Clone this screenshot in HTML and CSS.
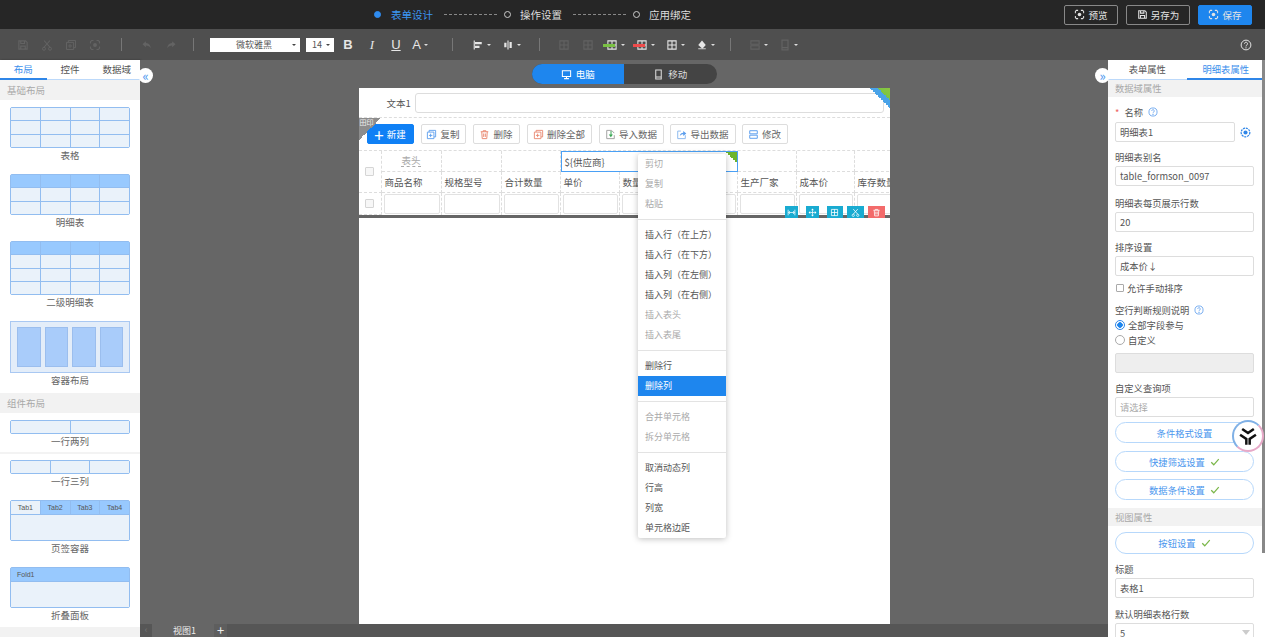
FILE: index.html
```html
<!DOCTYPE html>
<html lang="zh-CN">
<head>
    <meta charset="UTF-8">
    <meta name="viewport" content="width=device-width, initial-scale=1.0">
    <title>表单设计</title>
    <link rel="stylesheet" href="styles.css">
</head>
<body>
    <svg class="defs" aria-hidden="true">
        <symbol id="i-grid" viewBox="0 0 16 16"><path d="M2.5 2.5h11v11h-11zM2.5 8h11M8 2.5v11" fill="none" stroke="currentColor" stroke-width="1.4"/></symbol>
        <symbol id="i-focus" viewBox="0 0 16 16"><circle cx="8" cy="8" r="2.6" fill="currentColor"/><path d="M2 6V3.5L3.5 2H6M10 2h2.5L14 3.5V6M14 10v2.5L12.500 14H10M6 14H3.500L2 12.500V10" fill="none" stroke="currentColor" stroke-width="1.500"/></symbol>
        <symbol id="i-save" viewBox="0 0 16 16"><path d="M2.500 2.500h9l2 2v9h-11zM5 2.500v3.500h5V2.500M5 13.500V9.500h6v4" fill="none" stroke="currentColor" stroke-width="1.500"/></symbol>
        <symbol id="i-pc" viewBox="0 0 16 16"><path d="M2 2.500h12v8.500H2zM8 11v2.500M4.500 14h7" fill="none" stroke="currentColor" stroke-width="1.500"/></symbol>
        <symbol id="i-phone" viewBox="0 0 16 16"><path d="M4 1.500h8v13H4zM4 11.500h8" fill="none" stroke="currentColor" stroke-width="1.500"/></symbol>
        <symbol id="i-check" viewBox="0 0 16 16"><path d="M2 8.500l4 4 8-9" fill="none" stroke="currentColor" stroke-width="2"/></symbol>
        <symbol id="i-help" viewBox="0 0 16 16"><circle cx="8" cy="8" r="6.500" fill="none" stroke="currentColor" stroke-width="1.300"/><path d="M6 6.300a2 2 0 1 1 3.200 1.600c-.8.600-1.200 1-1.200 2" fill="none" stroke="currentColor" stroke-width="1.300"/><circle cx="8" cy="11.800" r=".9" fill="currentColor"/></symbol>
        <symbol id="i-trash" viewBox="0 0 16 16"><path d="M2.500 4h11M6 4V2.500h4V4M4 4l.7 10h6.600L12 4M6.800 6.500v5M9.200 6.500v5" fill="none" stroke="currentColor" stroke-width="1.400"/></symbol>
        <symbol id="i-copy" viewBox="0 0 16 16"><path d="M4.500 4.500V2h9.500v9.500h-2.500M2 4.500h9.500V14H2zM6.700 6.800v5M4.300 9.300h5" fill="none" stroke="currentColor" stroke-width="1.300"/></symbol>
        <symbol id="i-box" viewBox="0 0 16 16"><path d="M2.500 2.500h11v4.500h-11zM2.500 9h11v4.500h-11z" fill="none" stroke="currentColor" stroke-width="1.400"/></symbol>
        <symbol id="i-up" viewBox="0 0 16 16"><path d="M13.500 9v5h-11V3H7" fill="none" stroke="#8ab8ee" stroke-width="1.400"/><path d="M5.500 10c.5-3 2.500-4.500 5-4.500V3L15 6.500 10.500 10V7.500c-2 0-3.500.8-5 2.500z" fill="currentColor"/></symbol>
        <symbol id="i-down" viewBox="0 0 16 16"><path d="M13.500 9v5h-11V2h7l4 4" fill="none" stroke="#999" stroke-width="1.300"/><path d="M8 3v5H5.500L8.500 12l3-4H9.500V3z" fill="currentColor"/></symbol>
        <symbol id="i-target" viewBox="0 0 16 16"><circle cx="8" cy="8" r="6.300" fill="none" stroke="currentColor" stroke-width="1.800" stroke-dasharray="3 1.200"/><circle cx="8" cy="8" r="3" fill="currentColor"/></symbol>
    </svg>

    <header class="topbar">
        <div class="steps">
            <span class="step-dot active"></span><span class="step-name active">表单设计</span>
            <span class="step-line"></span>
            <span class="step-dot"></span><span class="step-name">操作设置</span>
            <span class="step-line"></span>
            <span class="step-dot"></span><span class="step-name">应用绑定</span>
        </div>
        <div class="top-actions">
            <button class="top-btn btn-preview"><svg class="ico"><use href="#i-focus"/></svg>预览</button>
            <button class="top-btn btn-saveas"><svg class="ico"><use href="#i-save"/></svg>另存为</button>
            <button class="top-btn btn-save"><svg class="ico"><use href="#i-focus"/></svg>保存</button>
        </div>
    </header>

    <div class="toolbar">
        <span class="tool off"><svg class="ico"><use href="#i-save"/></svg></span>
        <span class="tool off"><svg class="ico" viewBox="0 0 16 16"><path d="M4 2l8 9M12 2l-8 9" stroke="currentColor" stroke-width="1.500"/><circle cx="4" cy="13" r="2" fill="none" stroke="currentColor" stroke-width="1.300"/><circle cx="12" cy="13" r="2" fill="none" stroke="currentColor" stroke-width="1.300"/></svg></span>
        <span class="tool off"><svg class="ico"><use href="#i-copy"/></svg></span>
        <span class="tool off"><svg class="ico"><use href="#i-focus"/></svg></span>
        <span class="sep sep-a"></span>
        <span class="tool off"><svg class="ico" viewBox="0 0 16 16"><path d="M6.500 3L2 7l4.500 4V8.500c3 0 5 1 6.500 4 0-4-2-7-6.500-7.300z" fill="currentColor"/></svg></span>
        <span class="tool off"><svg class="ico" viewBox="0 0 16 16"><path d="M9.500 3L14 7l-4.500 4V8.500c-3 0-5 1-6.500 4 0-4 2-7 6.500-7.300z" fill="currentColor"/></svg></span>
        <span class="sep sep-b"></span>
        <span class="font-select">微软雅黑<i class="caret dark"></i></span>
        <span class="size-select">14<i class="caret dark"></i></span>
        <span class="tool txt bold">B</span>
        <span class="tool txt ital">I</span>
        <span class="tool txt under">U</span>
        <span class="tool txt color">A<i class="caret"></i></span>
        <span class="sep sep-c"></span>
        <span class="tool wide"><svg class="ico" viewBox="0 0 16 16"><path d="M3 2v12" stroke="currentColor" stroke-width="1.500"/><path d="M4 4h9v3H4zM4 9h6v3H4z" fill="currentColor"/></svg><i class="caret"></i></span>
        <span class="tool wide"><svg class="ico" viewBox="0 0 16 16"><path d="M8 2v12" stroke="currentColor" stroke-width="1.500"/><path d="M3 5h3v6H3zM10 4h3v8h-3z" fill="currentColor"/></svg><i class="caret"></i></span>
        <span class="sep sep-d"></span>
        <span class="tool off"><svg class="ico"><use href="#i-grid"/></svg></span>
        <span class="tool off"><svg class="ico"><use href="#i-grid"/></svg></span>
        <span class="tool wide mark-green"><svg class="ico"><use href="#i-grid"/></svg><i class="caret"></i></span>
        <span class="tool wide mark-red"><svg class="ico"><use href="#i-grid"/></svg><i class="caret"></i></span>
        <span class="tool wide"><svg class="ico"><use href="#i-grid"/></svg><i class="caret"></i></span>
        <span class="tool wide"><svg class="ico" viewBox="0 0 16 16"><path d="M8 2l5 6-4.500 5L3 8z" fill="currentColor"/><path d="M3 13h10" stroke="#ddd" stroke-width="1.200"/></svg><i class="caret"></i></span>
        <span class="sep sep-e"></span>
        <span class="tool wide off"><svg class="ico"><use href="#i-box"/></svg><i class="caret"></i></span>
        <span class="tool wide off"><svg class="ico"><use href="#i-phone"/></svg><i class="caret"></i></span>
        <span class="tool help"><svg class="ico"><use href="#i-help"/></svg></span>
    </div>

    <main class="workspace">
        <aside class="left-panel">
            <div class="tabs">
                <span class="tab active">布局</span>
                <span class="tab">控件</span>
                <span class="tab">数据域</span>
            </div>
            <div class="section">基础布局</div>

            <div class="thumb cols-4 rows-3 t1"><i></i><i></i><i></i><i></i><i></i><i></i><i></i><i></i><i></i><i></i><i></i><i></i></div>
            <div class="thumb-name">表格</div>
            <div class="thumb cols-4 rows-3 t2"><i class="head"></i><i class="head"></i><i class="head"></i><i class="head"></i><i></i><i></i><i></i><i></i><i></i><i></i><i></i><i></i></div>
            <div class="thumb-name">明细表</div>
            <div class="thumb cols-4 rows-4 t2 tall"><i class="head"></i><i class="head"></i><i class="head"></i><i class="head"></i><i></i><i></i><i></i><i></i><i></i><i></i><i></i><i></i><i></i><i></i><i></i><i></i></div>
            <div class="thumb-name">二级明细表</div>
            <div class="container-thumb"><i></i><i></i><i></i><i></i></div>
            <div class="thumb-name">容器布局</div>

            <div class="section section-b">组件布局</div>
            <div class="thumb thin t3 two"><i></i><i></i></div>
            <div class="thumb-name">一行两列</div>
            <div class="divider"></div>
            <div class="thumb thin t4 three"><i></i><i></i><i></i></div>
            <div class="thumb-name">一行三列</div>
            <div class="thumb tabs-thumb t5"><i class="tab-cell plain">Tab1</i><i class="tab-cell">Tab2</i><i class="tab-cell">Tab3</i><i class="tab-cell">Tab4</i><i class="tab-body"></i></div>
            <div class="thumb-name">页签容器</div>
            <div class="thumb fold-thumb t6"><i class="head">Fold1</i><i></i></div>
            <div class="thumb-name">折叠面板</div>
            <div class="panel-foot"></div>
        </aside>

        <section class="canvas">
            <div class="device-switch">
                <span class="device active"><svg class="ico"><use href="#i-pc"/></svg>电脑</span>
                <span class="device"><svg class="ico"><use href="#i-phone"/></svg>移动</span>
            </div>
            <div class="paper">
                <span class="corner-flag"></span>
                <div class="text-row">
                    <span class="text-label">文本1</span>
                    <span class="text-input"></span>
                </div>
                <div class="table-block">
                    <span class="block-tag"><em>田印</em></span>
                    <div class="action-row">
                        <button class="act primary"><b>+</b>新建</button>
                        <button class="act act-copy"><svg class="ico blue"><use href="#i-copy"/></svg>复制</button>
                        <button class="act act-del"><svg class="ico red"><use href="#i-trash"/></svg>删除</button>
                        <button class="act act-delall"><svg class="ico red"><use href="#i-copy"/></svg>删除全部</button>
                        <button class="act act-imp"><svg class="ico green"><use href="#i-down"/></svg>导入数据</button>
                        <button class="act act-exp"><svg class="ico blue"><use href="#i-up"/></svg>导出数据</button>
                        <button class="act act-edit"><svg class="ico blue"><use href="#i-box"/></svg>修改</button>
                    </div>
                    <div class="sheet">
                        <div class="cell check-cell span-2"><i class="check"></i></div>
                        <div class="cell head-cell"><span>表头</span></div>
                        <div class="cell"></div>
                        <div class="cell"></div>
                        <div class="cell selected">${供应商}</div>
                        <div class="cell"></div>
                        <div class="cell"></div>
                        <div class="cell"></div>

                        <div class="cell title">商品名称</div>
                        <div class="cell title">规格型号</div>
                        <div class="cell title">合计数量</div>
                        <div class="cell title">单价</div>
                        <div class="cell title">数量</div>
                        <div class="cell title"></div>
                        <div class="cell title">生产厂家</div>
                        <div class="cell title">成本价</div>
                        <div class="cell title">库存数量</div>

                        <div class="cell check-cell"><i class="check"></i></div>
                        <div class="cell slot"><i></i></div>
                        <div class="cell slot"><i></i></div>
                        <div class="cell slot"><i></i></div>
                        <div class="cell slot"><i></i></div>
                        <div class="cell slot"><i></i></div>
                        <div class="cell slot"><i></i></div>
                        <div class="cell slot"><i></i></div>
                        <div class="cell slot"><i></i></div>
                        <div class="cell slot"><i></i></div>
                    </div>
                    <div class="handles">
                        <span class="handle"><svg class="ico" viewBox="0 0 16 16"><path d="M2 3v10M14 3v10M3 8h10M5 5.500L3 8l2 2.500M11 5.500L13 8l-2 2.500" fill="none" stroke="currentColor" stroke-width="1.300"/></svg></span>
                        <span class="handle"><svg class="ico" viewBox="0 0 16 16"><path d="M8 1l2.500 3h-5zM8 15l2.500-3h-5zM1 8l3-2.500v5zM15 8l-3-2.500v5z" fill="currentColor"/><path d="M8 4v8M4 8h8" stroke="currentColor" stroke-width="1.300"/></svg></span>
                        <span class="handle h-grid"><svg class="ico"><use href="#i-grid"/></svg></span>
                        <span class="handle h-wide"><svg class="ico" viewBox="0 0 16 16"><path d="M4 2l8 9M12 2l-8 9" stroke="currentColor" stroke-width="1.400"/><circle cx="4" cy="13" r="2" fill="none" stroke="currentColor" stroke-width="1.300"/><circle cx="12" cy="13" r="2" fill="none" stroke="currentColor" stroke-width="1.300"/></svg></span>
                        <span class="handle h-wide danger"><svg class="ico"><use href="#i-trash"/></svg></span>
                    </div>
                </div>
            </div>
            <div class="view-bar">
                <span class="view-arrow">‹</span>
                <span class="view-name">视图1</span>
                <span class="view-add">+</span>
            </div>

            <ul class="context-menu">
                <li class="off">剪切</li>
                <li class="off">复制</li>
                <li class="off">粘贴</li>
                <li class="line"></li>
                <li>插入行（在上方）</li>
                <li>插入行（在下方）</li>
                <li>插入列（在左侧）</li>
                <li>插入列（在右侧）</li>
                <li class="off">插入表头</li>
                <li class="off">插入表尾</li>
                <li class="line"></li>
                <li>删除行</li>
                <li class="current">删除列</li>
                <li class="line"></li>
                <li class="off">合并单元格</li>
                <li class="off">拆分单元格</li>
                <li class="line"></li>
                <li>取消动态列</li>
                <li>行高</li>
                <li>列宽</li>
                <li>单元格边距</li>
            </ul>
        </section>

        <aside class="right-panel">
            <div class="tabs">
                <span class="tab">表单属性</span>
                <span class="tab active">明细表属性</span>
            </div>
            <div class="section sec-data">数据域属性</div>
            <div class="form">
                <label class="lbl l-name"><span class="req">*</span> 名称 <svg class="ico q"><use href="#i-help"/></svg></label>
                <div class="name-row">
                    <span class="inp">明细表1</span>
                    <svg class="ico bind"><use href="#i-target"/></svg>
                </div>
                <label class="lbl gap-8">明细表别名</label>
                <span class="inp">table_formson_0097</span>
                <label class="lbl gap-10">明细表每页展示行数</label>
                <span class="inp">20</span>
                <label class="lbl gap-8">排序设置</label>
                <span class="inp">成本价↓</span>
                <div class="opt opt-check"><i class="box"></i>允许手动排序</div>
                <label class="lbl gap-8">空行判断规则说明 <svg class="ico q"><use href="#i-help"/></svg></label>
                <div class="opt"><i class="radio on"></i>全部字段参与</div>
                <div class="opt"><i class="radio"></i>自定义</div>
                <span class="inp disabled"></span>
                <label class="lbl gap-8">自定义查询项</label>
                <span class="inp hint">请选择</span>
                <button class="pill p-first">条件格式设置</button>
                <button class="pill p-second">快捷筛选设置 <svg class="ico ok"><use href="#i-check"/></svg></button>
                <button class="pill p-third">数据条件设置 <svg class="ico ok"><use href="#i-check"/></svg></button>
            </div>
            <div class="section sec-view">视图属性</div>
            <div class="form">
                <button class="pill p-view">按钮设置 <svg class="ico ok"><use href="#i-check"/></svg></button>
                <label class="lbl gap-8">标题</label>
                <span class="inp">表格1</span>
                <label class="lbl gap-9">默认明细表格行数</label>
                <span class="inp sel">5<i class="sel-caret"></i></span>
            </div>
            <span class="scroll-thumb"></span>
        </aside>

        <button class="collapse col-left">«</button>
        <button class="collapse col-right">»</button>
        <div class="assist">
            <svg viewBox="0 0 24 24"><path d="M5 3.500l7 5 7-5M2.500 10.500l7.500 5v7M21.500 10.500l-7.500 5v7" fill="none" stroke="#111" stroke-width="3"/></svg>
        </div>
    </main>
</body>
</html>
```

FILE: styles.css
```css
* {
    box-sizing: border-box;
}

html, body {
    height: 100%;
}

body {
    margin: 0;
    height: 637px;
    overflow: hidden;
    display: flex;
    flex-direction: column;
    font-family: "Noto Sans CJK SC", "Liberation Sans", sans-serif;
    font-size: 9.500px;
    color: #555;
    background-color: #666;
}

.defs {
    display: none;
}

button {
    font-family: inherit;
    font-size: 9.500px;
    cursor: pointer;
}

i, em {
    font-style: normal;
}

.ico {
    width: 11px;
    height: 11px;
    flex: none;
}

/* top bar */
.topbar {
    height: 29px;
    flex: none;
    display: flex;
    align-items: center;
    background-color: #262626;
    padding-left: 374px;
    padding-right: 13px;
    color: #ddd;
}

.steps {
    display: flex;
    align-items: center;
    font-size: 10.500px;
}

.step-dot {
    width: 7px;
    height: 7px;
    border-radius: 50%;
    border: 1px solid #ccc;
}

.step-dot.active {
    background-color: #2f8cf0;
    border-color: #2f8cf0;
}

.step-name {
    margin-left: 9px;
}

.step-name.active {
    margin-left: 10px;
    color: #3c96f3;
}

.step-line {
    width: 53px;
    margin: 0 7px 0 11px;
    border-top: 1px dashed #888;
}

.top-actions {
    margin-left: auto;
    display: flex;
    gap: 8px;
}

.top-btn {
    height: 20px;
    display: flex;
    align-items: center;
    justify-content: center;
    gap: 3px;
    background: none;
    border: 1px solid #888;
    border-radius: 2px;
    color: #e4e4e4;
    padding: 0;
}

.btn-preview, .btn-save {
    width: 54px;
}

.btn-saveas {
    width: 64px;
}

.btn-save {
    background-color: #1e86ee;
    border-color: #1e86ee;
}

/* toolbar */
.toolbar {
    height: 31px;
    flex: none;
    display: flex;
    align-items: center;
    padding-left: 11px;
    background-color: #4f4f4f;
    color: #e6e6e6;
}

.tool {
    width: 24px;
    height: 18px;
    flex: none;
    display: flex;
    align-items: center;
    justify-content: center;
    position: relative;
}

.tool .ico {
    width: 12px;
    height: 12px;
}

.tool.off {
    color: #636363;
}

.tool.wide {
    width: 30px;
}

.tool.txt {
    font-family: "Liberation Sans", sans-serif;
    font-size: 13px;
}

.bold {
    font-weight: bold;
    margin-left: 2px;
}

.ital {
    font-style: italic;
    font-family: "Liberation Serif", serif !important;
}

.under {
    text-decoration: underline;
}

.caret {
    width: 0;
    height: 0;
    margin-left: 3px;
    border: 2.500px solid transparent;
    border-top-color: #ddd;
    border-bottom: 0;
}

.caret.dark {
    position: absolute;
    right: 4px;
    top: 6px;
    border-top-color: #444;
}

.sep {
    width: 1px;
    height: 13px;
    flex: none;
    background-color: #777;
}

.sep-a { margin: 0 13px 0 14px; }
.sep-b { margin: 0 16px 0 10px; }
.sep-c { margin: 0 13px 0 20px; }
.sep-d { margin: 0 12px 0 13px; }
.sep-e { margin: 0 12px 0 10px; }

.font-select, .size-select {
    height: 14px;
    flex: none;
    position: relative;
    display: flex;
    align-items: center;
    background-color: #fff;
    color: #555;
    font-size: 9px;
}

.font-select {
    width: 90px;
    padding-left: 26px;
}

.size-select {
    width: 28px;
    margin-left: 6px;
    padding-left: 6px;
}

.mark-green::after, .mark-red::after {
    content: "";
    position: absolute;
    left: 3px;
    top: 8px;
    width: 12px;
    height: 3px;
}

.mark-green::after {
    background-color: #7ac143;
}

.mark-red::after {
    background-color: #ef4b4b;
}

.help {
    margin-left: auto;
    margin-right: 7px;
}

/* main area */
.workspace {
    flex: 1;
    min-height: 0;
    display: flex;
    position: relative;
}

.left-panel {
    width: 140px;
    flex: none;
    background-color: #fff;
    overflow: hidden;
    box-shadow: 1px 0 2px rgba(0, 0, 0, 0.3);
}

.tabs {
    height: 20px;
    display: flex;
    border-bottom: 1px solid #bcd9fa;
    color: #555;
}

.tab {
    flex: 1;
    text-align: center;
    line-height: 19px;
    height: 20px;
}

.tab.active {
    color: #3a8eec;
    border-bottom: 2px solid #2f86e8;
}

.section {
    height: 20px;
    line-height: 20px;
    padding-left: 7px;
    background-color: #f2f2f2;
    color: #a8a8a8;
}

.thumb-name {
    height: 15px;
    line-height: 14px;
    text-align: center;
    color: #666;
}

.thumb {
    display: grid;
    gap: 1px;
    margin: 0 10px;
    height: 41px;
    background-color: #92bdf0;
    border: 1px solid #92bdf0;
    border-radius: 2px;
}

.thumb i {
    background-color: #eaf2fa;
}

.thumb i.head {
    background-color: #98c9fe;
}

.cols-4 {
    grid-template-columns: repeat(4, 1fr);
}

.rows-3 {
    grid-template-rows: repeat(3, 1fr);
}

.rows-4 {
    grid-template-rows: repeat(4, 1fr);
}

.t1 { margin-top: 7px; }
.t2 { margin-top: 11px; }
.tall { height: 54px; }
.t3 { margin-top: 7px; }
.t4 { margin-top: 6px; }
.t5 { margin-top: 11px; }
.t6 { margin-top: 11px; }

.container-thumb {
    margin: 11px 10px 0;
    height: 52px;
    display: grid;
    grid-template-columns: repeat(4, 1fr);
    gap: 4px;
    padding: 5px 6px 5px;
    background-color: #e3edf9;
    border: 1px solid #a9c8f2;
}

.container-thumb i {
    background-color: #a9ccfa;
    border: 1px solid #9bbeee;
}

.section-b {
    margin-top: 5px;
}

.thin {
    height: 14px;
}

.two {
    grid-template-columns: 1fr 1fr;
}

.three {
    grid-template-columns: repeat(3, 1fr);
}

.divider {
    height: 2px;
    margin-top: 3px;
    background-color: #f3f3f3;
}

.tabs-thumb {
    grid-template-columns: repeat(4, 1fr);
    grid-template-rows: 13px 1fr;
}

.tab-cell {
    background-color: #98c9fe !important;
    font-size: 7px;
    line-height: 13px;
    text-align: center;
    font-family: "Liberation Sans", sans-serif;
    color: #555;
}

.tab-cell.plain {
    background-color: #eaf2fa !important;
}

.tab-body {
    grid-column: 1 / 5;
}

.fold-thumb {
    grid-template-rows: 13px 1fr;
}

.fold-thumb .head {
    padding-left: 6px;
    font-size: 7px;
    line-height: 13px;
    font-family: "Liberation Sans", sans-serif;
    color: #555;
}

.panel-foot {
    height: 10px;
    margin-top: 4px;
    background-color: #f2f2f2;
}

/* canvas */
.canvas {
    flex: 1;
    min-width: 0;
    display: flex;
    flex-direction: column;
    align-items: center;
    background-color: #666;
    position: relative;
}

.device-switch {
    width: 185px;
    height: 20px;
    flex: none;
    margin-top: 4px;
    display: flex;
    border-radius: 10px;
    overflow: hidden;
    background-color: #444;
    color: #ddd;
}

.device {
    flex: 1;
    display: flex;
    align-items: center;
    justify-content: center;
    gap: 4px;
}

.device.active {
    background-color: #1e86ee;
    color: #fff;
}

.paper {
    width: 531px;
    flex: 1;
    min-height: 0;
    margin-top: 4px;
    background-color: #fff;
    position: relative;
}

.corner-flag {
    position: absolute;
    right: 0;
    top: 0;
    width: 20px;
    height: 20px;
    background: linear-gradient(225deg, #8cc63f 0, #7cc544 30%, #4aa3e8 30%, #4aa3e8 50%, transparent 50%);
}

.text-row {
    height: 30px;
    display: flex;
    align-items: center;
    padding: 0 6px 0 28px;
    border-bottom: 1px dashed #ddd;
}

.text-label {
    width: 28px;
    color: #555;
}

.text-input {
    flex: 1;
    height: 20px;
    border: 1px solid #ddd;
    border-radius: 3px;
}

.table-block {
    position: relative;
    border-bottom: 3px solid #666;
}

.block-tag {
    position: absolute;
    left: 0;
    top: 0;
    width: 22px;
    height: 22px;
    background: linear-gradient(135deg, #8d8d8d 50%, transparent 50%);
}

.block-tag em {
    position: absolute;
    left: 1px;
    top: -1px;
    font-size: 7px;
    color: #eee;
}

.action-row {
    height: 32px;
    display: flex;
    align-items: center;
    padding-left: 8px;
    gap: 7px;
}

.act {
    height: 20px;
    display: flex;
    align-items: center;
    justify-content: center;
    gap: 3px;
    padding: 0;
    background-color: #fff;
    border: 1px solid #ddd;
    border-radius: 2px;
    color: #666;
}

.primary {
    width: 47px;
    background-color: #0f80f5;
    border-color: #0f80f5;
    color: #fff;
}

.primary b {
    font-size: 17px;
    line-height: 15px;
    font-weight: 400;
}

.act-copy { width: 45px; }
.act-del { width: 47px; }
.act-delall { width: 65px; }
.act-imp { width: 65px; }
.act-exp { width: 66px; margin-left: -1px; }
.act-edit { width: 46px; margin-left: -1px; }

.blue { color: #5b9ded; }
.red { color: #e9876f; }
.green { color: #3aa655; }

.sheet {
    display: grid;
    grid-template-columns: 23px 60px 60px 59px 59px 59px 59px 59px 58px 60px;
    grid-template-rows: 21px 21px 22px;
    overflow: hidden;
    border-top: 1px dashed #ddd;
}

.cell {
    border-right: 1px dashed #ddd;
    border-bottom: 1px dashed #ddd;
    min-width: 0;
    white-space: nowrap;
    overflow: hidden;
    display: flex;
    align-items: center;
    padding-left: 3px;
}

.span-2 {
    grid-row: span 2;
}

.check-cell {
    justify-content: center;
    padding-left: 0;
    border-left: 0;
}

.check {
    width: 9px;
    height: 9px;
    border: 1px solid #d5d5d5;
    background-color: #f7f7f7;
    border-radius: 1px;
}

.head-cell {
    justify-content: center;
    color: #aaa;
    padding: 0;
}

.head-cell span {
    border-bottom: 1px dashed #aaa;
    line-height: 11px;
}

.selected {
    grid-column: span 3;
    border: 1px solid #4aa0f5;
    color: #555;
    position: relative;
}

.selected::after {
    content: "";
    position: absolute;
    right: 0;
    top: 0;
    width: 11px;
    height: 11px;
    background: linear-gradient(225deg, #6cb52d 50%, transparent 50%);
}

.title {
    color: #555;
}

.slot {
    padding: 0 1px 0 2px;
    border-bottom: 0;
}

.slot i {
    flex: 1;
    height: 20px;
    border: 1px solid #e2e2e2;
    border-radius: 2px;
}

.handles {
    position: absolute;
    right: 5px;
    bottom: -3px;
    display: flex;
    gap: 8px;
}

.handle {
    width: 13px;
    height: 12px;
    display: flex;
    align-items: center;
    justify-content: center;
    background-color: #19abd1;
    color: #fff;
}

.handle .ico {
    width: 9px;
    height: 9px;
}

.handle.h-grid {
    width: 16px;
}

.handle.h-wide {
    width: 17px;
    margin-left: -4px;
}

.handle.danger {
    background-color: #f36b6b;
}

.view-bar {
    width: 100%;
    height: 13px;
    flex: none;
    display: flex;
    align-items: center;
    color: #eee;
    font-size: 9px;
    background-color: #565656;
}

.view-arrow {
    width: 12px;
    height: 13px;
    line-height: 12px;
    text-align: center;
    color: #777;
}

.view-name {
    width: 62px;
    height: 13px;
    line-height: 13px;
    padding-left: 21px;
    background-color: #666;
}

.view-add {
    width: 13px;
    height: 13px;
    line-height: 12px;
    text-align: center;
    font-size: 13px;
    background-color: #5e5e5e;
}

/* context menu */
.context-menu {
    position: absolute;
    left: 498px;
    top: 94px;
    width: 88px;
    margin: 0;
    padding: 0;
    list-style: none;
    background-color: #fff;
    border-radius: 2px;
    box-shadow: 0 1px 6px rgba(0, 0, 0, 0.25);
    color: #555;
    font-size: 9px;
}

.context-menu li {
    height: 20px;
    line-height: 20px;
    padding-left: 7px;
}

.context-menu .off {
    color: #aaa;
}

.context-menu .current {
    background-color: #1e86ee;
    color: #fff;
}

.context-menu .line {
    height: 11px;
    padding: 0;
    background: linear-gradient(#e3e3e3, #e3e3e3) center / 100% 1px no-repeat;
}

/* right panel */
.right-panel {
    width: 157px;
    flex: none;
    background-color: #fff;
    overflow: hidden;
    position: relative;
    font-size: 9.300px;
}

.sec-data {
    height: 17px;
    line-height: 17px;
}

.sec-view {
    height: 18px;
    line-height: 18px;
    margin-top: 8px;
}

.form {
    display: flex;
    flex-direction: column;
    padding: 0 11px 0 7px;
}

.lbl {
    height: 14px;
    line-height: 14px;
    display: flex;
    align-items: center;
    gap: 3px;
    color: #555;
    white-space: pre;
}

.l-name {
    margin-top: 8px;
}

.gap-8 { margin-top: 8px; }
.gap-9 { margin-top: 9px; }
.gap-10 { margin-top: 10px; }

.req {
    color: #e66;
}

.q {
    color: #5b9ded;
    width: 10px;
    height: 10px;
}

.inp {
    height: 20px;
    line-height: 18px;
    margin-top: 2px;
    padding-left: 4px;
    border: 1px solid #ddd;
    border-radius: 2px;
    color: #555;
    flex: none;
    position: relative;
}

.name-row {
    display: flex;
    align-items: center;
    margin-top: 3px;
}

.name-row .inp {
    width: 120px;
    margin-top: 0;
}

.bind {
    margin-left: 5px;
    color: #2f86e8;
}

.opt {
    height: 14px;
    margin-top: 1px;
    display: flex;
    align-items: center;
    gap: 3px;
    color: #555;
}

.opt-check {
    margin-top: 5px;
    padding-left: 1px;
}

.box {
    width: 8px;
    height: 8px;
    border: 1px solid #aaa;
    border-radius: 1px;
}

.radio {
    width: 10px;
    height: 10px;
    border: 1px solid #aaa;
    border-radius: 50%;
    background-color: #fff;
}

.radio.on {
    border-color: #2f86e8;
    background: radial-gradient(circle, #1e86ee 0 2.500px, #fff 3px);
}

.disabled {
    margin-top: 6px;
    background-color: #eee;
}

.hint {
    color: #aaa;
}

.pill {
    height: 21px;
    margin-top: 7px;
    display: flex;
    align-items: center;
    justify-content: center;
    gap: 3px;
    padding: 0;
    background-color: #fff;
    border: 1px solid #b7d8fb;
    border-radius: 11px;
    color: #4a96ee;
    font-size: 9.300px;
    white-space: pre;
}

.p-first {
    margin-top: 5px;
}

.p-second {
    margin-top: 8px;
}

.p-view {
    height: 22px;
    margin-top: 6px;
}

.ok {
    color: #7ab648;
    width: 10px;
    height: 10px;
}

.sel-caret {
    position: absolute;
    right: 3px;
    top: 6px;
    width: 0;
    height: 0;
    border: 4px solid transparent;
    border-top: 5px solid #ccc;
    border-bottom: 0;
}

.scroll-thumb {
    position: absolute;
    right: 0;
    top: 0;
    width: 3px;
    height: 493px;
    background-color: #888;
}

.collapse {
    position: absolute;
    top: 8px;
    width: 15px;
    height: 15px;
    padding: 0;
    border: 0;
    border-radius: 50%;
    background-color: #fff;
    color: #4a96ee;
    font-size: 13px;
    line-height: 12px;
}

.col-left {
    left: 138px;
}

.col-right {
    left: 1095px;
}

.assist {
    position: absolute;
    left: 1232px;
    top: 360px;
    width: 32px;
    height: 32px;
    padding: 4px;
    border-radius: 50%;
    background: #fff;
    border: 2px solid;
    border-color: #7fb0e6 #e7a9c8 #e7a9c8 #7fb0e6;
}

.assist svg {
    display: block;
    width: 100%;
    height: 100%;
}
```
